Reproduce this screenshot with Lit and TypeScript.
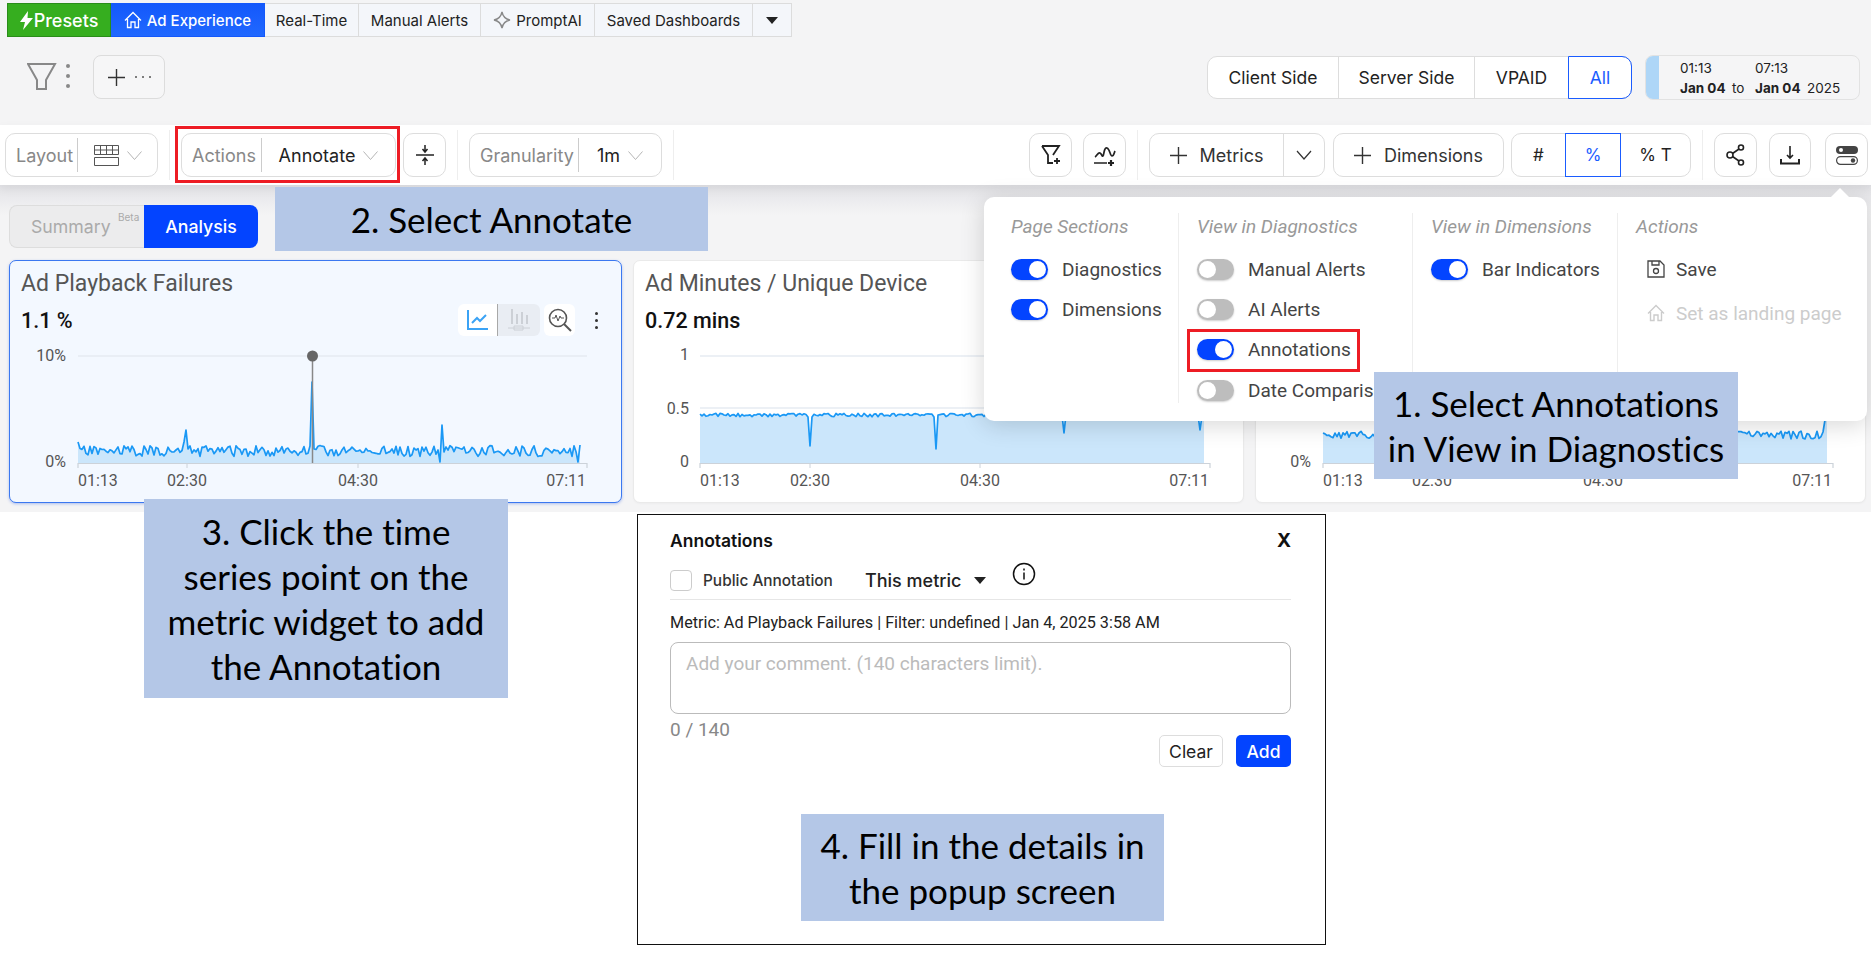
import { LitElement, html, css, svg } from 'lit';
import { customElement } from 'lit/decorators.js';

const rng = (seed: number) => () => {
  seed = (seed * 1664525 + 1013904223) % 4294967296;
  return seed / 4294967296;
};

type Spike = [number, number];

interface ChartCfg {
  view: number;
  width: number;
  x0: number;
  x1: number;
  fillEnd: number;
  base: number;
  jitter: number;
  seed: number;
  spikes: Spike[];
  ylabels: [string, number][];
  grid: number[];
  ticks: [string, number][];
  labelX: number;
}

const BASELINE = 463;

function series(c: ChartCfg) {
  const r = rng(c.seed);
  const pts: [number, number][] = [];
  for (let x = c.x0; x <= c.fillEnd; x += 2) {
    let y = c.base + (r() - 0.5) * c.jitter * 2;
    const hit = c.spikes.find((s) => Math.abs(s[0] - x) < 1);
    if (hit) y = hit[1];
    pts.push([x, +y.toFixed(1)]);
  }
  return pts;
}

function chart(c: ChartCfg, extra: unknown = null) {
  const pts = series(c);
  const line = pts.map((p) => p.join(',')).join(' ');
  const area = `${c.x0},${BASELINE} ${line} ${c.fillEnd},${BASELINE}`;
  return html`<svg class="chart" width=${c.width} height="155" viewBox="${c.view} 345 ${c.width} 155">
    ${c.grid.map((y) => svg`<line x1=${c.x0} x2=${c.x1} y1=${y} y2=${y} stroke="#e6ebf2" stroke-width="1.5"/>`)}
    <polygon points=${area} fill="#cbe6fb"/>
    <polyline points=${line} fill="none" stroke="#1a98f5" stroke-width="1.7" stroke-linejoin="round"/>
    <path d="M${c.x0} 468V463.5H${c.x1}V468" fill="none" stroke="#ccd2d9" stroke-width="1.2"/>
    ${c.ticks.slice(1, 3).map((t) => svg`<line x1=${t[1]} x2=${t[1]} y1="463" y2="468" stroke="#ccd2d9"/>`)}
    ${c.ylabels.map((l) => svg`<text x=${c.labelX} y=${l[1] + 6} text-anchor="end" class="axis">${l[0]}</text>`)}
    <text x=${c.x0} y="486" class="axis">${c.ticks[0][0]}</text>
    <text x=${c.ticks[1][1]} y="486" text-anchor="middle" class="axis">${c.ticks[1][0]}</text>
    <text x=${c.ticks[2][1]} y="486" text-anchor="middle" class="axis">${c.ticks[2][0]}</text>
    <text x=${c.x1 - 1} y="486" text-anchor="end" class="axis">${c.ticks[3][0]}</text>
    ${extra}
  </svg>`;
}

const card1: ChartCfg = {
  view: 10, width: 611, x0: 78, x1: 587, fillEnd: 580, base: 451, jitter: 5.5, seed: 11,
  spikes: [[78, 442], [184, 442], [186, 430], [188, 449], [310, 446], [312, 382], [314, 449], [438, 450], [440, 462], [442, 425], [444, 452], [578, 462], [580, 445]],
  ylabels: [['10%', 355], ['0%', 461]], grid: [356],
  ticks: [['01:13', 78], ['02:30', 187], ['04:30', 358], ['07:11', 587]], labelX: 66,
};
const card2: ChartCfg = {
  view: 634, width: 609, x0: 700, x1: 1210, fillEnd: 1204, base: 415, jitter: 1.8, seed: 5,
  spikes: [[808, 417], [810, 446], [812, 417], [934, 417], [936, 449], [938, 415], [1064, 433], [1200, 430]],
  ylabels: [['1', 354], ['0.5', 408], ['0', 461]], grid: [356, 408],
  ticks: [['01:13', 700], ['02:30', 810], ['04:30', 980], ['07:11', 1210]], labelX: 689,
};
const card3: ChartCfg = {
  view: 1257, width: 609, x0: 1324, x1: 1834, fillEnd: 1828, base: 435, jitter: 4, seed: 23,
  spikes: [[1824, 432], [1826, 420], [1828, 405]],
  ylabels: [['0%', 461]], grid: [],
  ticks: [['01:13', 1324], ['02:30', 1433], ['04:30', 1604], ['07:11', 1834]], labelX: 1312,
};

const chevron = html`<svg class="chev" width="15" height="9" viewBox="0 0 15 9"><path d="M.5.500l7 8 7-8" fill="none" stroke="currentColor" stroke-width="1"/></svg>`;
const plus = html`<svg width="17" height="17" viewBox="0 0 17 17"><path d="M8.500 0v17M0 8.500h17" stroke="#333" stroke-width="1.400"/></svg>`;
const homeIcon = (c: string, w = 1.3) => html`<svg width="18" height="18" viewBox="0 0 18 18" fill="none" stroke=${c} stroke-width=${w}><path d="M1 9.500L9 1.500l8 8M3.500 8v8.500h3.500v-5.500h4v5.500h3.500V8"/></svg>`;

@customElement('app-root')
export class AppRoot extends LitElement {
  static styles = css`
    :host { display: block; position: relative; width: 1871px; height: 967px; overflow: hidden; background: #fff; font-family: "Roboto", sans-serif; color: #333; }
    * { box-sizing: border-box; }
    .upper { background: #f4f4f5; height: 512px; }

    /* top tabs */
    .nav { display: flex; height: 37px; padding: 3px 0 0 7px; font-family: "Inter", sans-serif; font-size: 15px; }
    .nav > div { display: flex; align-items: center; justify-content: center; gap: 5px; background: #f4f6fa; border: 1px solid #dcdcdc; border-left: none; color: #222; white-space: nowrap; }
    .nav .presets { width: 104px; background: #36ae1f; border: 1px solid #2a8d1a; color: #fff; font-size: 18px; font-weight: 500; gap: 1px; }
    .nav .adx { width: 154px; background: linear-gradient(#1458fb, #2068ff); border-color: #1458fb; color: #fff; font-weight: 500; }
    .t-rt { width: 94px; } .t-ma { width: 122px; } .t-pa { width: 114px; } .t-sd { width: 158px; } .t-more { width: 39px; }
    .caret { width: 0; height: 0; border-left: 6px solid transparent; border-right: 6px solid transparent; border-top: 7px solid #222; }

    /* filter row */
    .filters { display: flex; align-items: center; height: 88px; padding: 0 11px 8px 27px; }
    .addf { width: 72px; height: 44px; margin-left: 22px; border: 1px solid #dcdcdc; border-radius: 8px; display: flex; align-items: center; justify-content: center; gap: 10px; background: #f6f6f7; }
    .dots3 { display: flex; gap: 5px; }
    .dots3 i { width: 2px; height: 2px; border-radius: 50%; background: #555; }
    .segment { margin-left: auto; display: flex; height: 43px; width: 425px; background: #fff; border: 1px solid #ddd; border-radius: 10px; font-family: "Inter", sans-serif; font-size: 17.5px; color: #222; }
    .segment div { display: flex; align-items: center; justify-content: center; border-right: 1px solid #ddd; }
    .seg-cs { width: 131px; } .seg-ss { width: 136px; } .seg-vp { width: 94px; }
    .segment .seg-all { flex: 1; margin: -1px; border: 1px solid #1a5cff; border-radius: 0 10px 10px 0; color: #1a5cff; }
    .date { position: relative; display: grid; grid-template-columns: 52px 23px 52px auto; grid-auto-rows: 20px; align-items: center; width: 215px; height: 45px; margin-left: 13px; padding: 2px 0 0 34px; background: #f5f5f6; border: 1px solid #e2e2e2; border-radius: 8px; overflow: hidden; font-family: "Inter", sans-serif; font-size: 13.5px; color: #222; }
    .date::before { content: ""; position: absolute; left: 0; top: 0; bottom: 0; width: 13px; background: #aed6f7; }
    .date b { font-weight: 700; }

    /* toolbar */
    .toolbar { position: relative; display: flex; align-items: center; height: 60px; padding: 0 3px 0 5px; background: #fff; box-shadow: 0 4px 10px rgba(0, 0, 0, 0.06); font-family: "Inter", sans-serif; }
    .grp { display: flex; align-items: center; height: 44px; background: #fff; border: 1px solid #ddd; border-radius: 10px; font-size: 18px; color: #222; }
    .grp .lbl { display: flex; align-items: center; height: 34px; padding: 0 0 0 10px; border-right: 1px solid #ccc; color: #888; white-space: nowrap; }
    .grp .val { display: flex; flex: 1; align-items: center; justify-content: center; gap: 8px; }
    .chev { color: #b5b5b5; }
    .g-layout { width: 153px; } .g-layout .lbl { width: 72px; }
    .g-actions { width: 215px; } .g-actions .lbl { width: 80px; }
    .g-gran { width: 193px; } .g-gran .lbl { width: 109px; }
    .sep { width: 1px; height: 50px; background: #eee; margin: 0 11px; }
    .ibtn { display: flex; align-items: center; justify-content: center; width: 43px; height: 44px; border: 1px solid #ddd; border-radius: 10px; background: #fff; flex: none; }
    .ibtn.dl { width: 42px; }
    .m-l7 { margin-left: 7px; } .m-l11 { margin-left: 11px; } .m-l12 { margin-left: 12px; } .m-l14 { margin-left: 14px; }
    .push { margin-left: auto; }
    .g-metrics { width: 176px; }
    .g-metrics .main { display: flex; align-items: center; justify-content: center; gap: 13px; width: 134px; height: 100%; border-right: 1px solid #ddd; color: #333; }
    .g-metrics .drop { flex: 1; display: flex; justify-content: center; color: #333; }
    .g-dims { width: 171px; margin-left: 8px; justify-content: center; gap: 13px; color: #333; }
    .g-unit { width: 180px; margin-left: 7px; overflow: visible; font-size: 17px; }
    .g-unit div { display: flex; align-items: center; justify-content: center; height: 100%; }
    .u-h { width: 53px; } .u-t { flex: 1; }
    .g-unit .u-p { width: 56px; height: 44px; border: 1px solid #1a5cff; color: #1a5cff; }

    /* tabs + cards */
    .body { height: 327px; padding: 20px 4px 0 9px; background: linear-gradient(#e3e3e7, #f4f4f5 30px); }
    .tabs { display: flex; width: 249px; height: 43px; font-size: 17.7px; font-family: "Inter", sans-serif; }
    .tabs .sum { position: relative; width: 135px; display: flex; align-items: center; padding-left: 21px; background: #ececed; border: 1px solid #ddd; border-right: none; border-radius: 8px 0 0 8px; color: #aaa; }
    .tabs .sum sup { position: absolute; left: 108px; top: 5px; font-size: 10px; color: #aaa; }
    .tabs .ana { flex: 1; display: flex; align-items: center; justify-content: center; background: #0344ff; border-radius: 0 8px 8px 0; color: #fff; font-weight: 500; }
    .cards { display: grid; grid-template-columns: 613px 611px 611px; gap: 11px; margin-top: 12px; }
    .card { height: 243px; background: #fff; border: 1px solid #eaeaea; border-radius: 7px; padding-top: 11px; box-shadow: 0 1px 2px rgba(0, 0, 0, 0.03); }
    .card.sel { background: #f3f8ff; border-color: #3b78f0; box-shadow: 0 1px 3px rgba(40, 90, 220, 0.35); }
    .title { height: 23px; line-height: 23px; padding-left: 11px; font-size: 23px; color: #555; white-space: nowrap; }
    .metric { display: flex; align-items: center; height: 32px; margin-top: 9px; padding-left: 11px; font-size: 21.5px; font-weight: 500; color: #111; }
    .tools { display: flex; align-items: center; margin-left: auto; }
    .tb { display: flex; align-items: center; justify-content: center; height: 32px; background: #fff; }
    .tb-line { width: 40px; border-radius: 6px 0 0 6px; border-right: 1px solid #a8a8a8; }
    .tb-bar { width: 42px; background: #e9edf3; border-radius: 0 6px 6px 0; }
    .tb-zoom { width: 31px; margin-left: 4px; border-radius: 6px; }
    .kebab { display: flex; flex-direction: column; gap: 4px; margin: 0 23px 0 20px; }
    .kebab i { width: 3px; height: 3px; border-radius: 50%; background: #333; }
    .chart { display: block; margin-top: 9px; }
    .axis { font: 16px "Roboto", sans-serif; fill: #555; }

    /* dialog */
    .dialog { width: 689px; height: 431px; margin: 2px 0 0 637px; padding: 0 34px 0 32px; border: 1px solid #111; background: #fff; }
    .d-head { display: flex; justify-content: space-between; align-items: center; height: 50px; font-family: "Inter", sans-serif; font-weight: 600; font-size: 17.5px; color: #111; }
    .d-x { font-size: 19px; font-weight: 700; }
    .d-row { display: flex; align-items: center; height: 32px; padding-bottom: 2px; }
    .chk { width: 22px; height: 21px; border: 1px solid #ccc; border-radius: 4px; }
    .pub { margin-left: 11px; width: 162px; font-family: "Inter", sans-serif; font-size: 15.4px; font-weight: 500; color: #333; white-space: nowrap; }
    .thism { font-family: "Inter", sans-serif; font-size: 18px; font-weight: 500; color: #222; width: 109px; white-space: nowrap; }
    .info { margin: 0 0 12px 26px; }
    .d-rule { height: 1px; margin-top: 2px; background: #e6e6e6; }
    .d-info { margin-top: 14px; height: 18px; line-height: 18px; font-size: 16.2px; color: #222; white-space: nowrap; }
    .ta { height: 72px; margin-top: 10px; padding: 9px 15px; border: 1px solid #bbb; border-radius: 8px; font-size: 19px; color: #bbb; }
    .cnt { margin-top: 4px; font-size: 19px; color: #888; }
    .d-btns { display: flex; justify-content: flex-end; gap: 13px; margin-top: -6px; font-family: "Inter", sans-serif; font-size: 17.5px; }
    .d-btns div { display: flex; align-items: center; justify-content: center; height: 32px; border-radius: 5px; }
    .clr { width: 64px; border: 1px solid #ddd; color: #222; }
    .add { width: 55px; background: #0344ff; color: #fff; font-weight: 500; }

    /* settings popover, opened over the page */
    .pop { position: absolute; left: 984px; top: 197px; width: 883px; height: 224px; display: flex; padding-top: 16px; background: #fff; border-radius: 10px; box-shadow: 0 4px 24px rgba(0, 0, 0, 0.16); }
    .pop::before { content: ""; position: absolute; left: 847px; top: -9px; border-left: 9px solid transparent; border-right: 9px solid transparent; border-bottom: 9px solid #fff; }
    .col { height: 190px; padding-left: 18px; border-right: 1px solid #eee; }
    .c1 { width: 195px; padding-left: 27px; } .c2 { width: 234px; } .c3 { width: 205px; } .c4 { flex: 1; border: none; }
    .col h4 { margin: 0 0 8px; height: 28px; line-height: 28px; font-size: 19px; font-weight: 400; font-style: italic; color: #999; white-space: nowrap; }
    .opt { display: flex; align-items: center; gap: 14px; height: 40.3px; font-size: 19px; color: #444; white-space: nowrap; }
    .tg { position: relative; width: 37px; height: 21px; border-radius: 11px; background: #bdbdbd; box-shadow: 0 1px 2px rgba(0, 0, 0, 0.2); flex: none; }
    .tg::after { content: ""; position: absolute; left: 2px; top: 2px; width: 17px; height: 17px; border-radius: 50%; background: #fff; }
    .tg.on { background: #0344ff; }
    .tg.on::after { left: 18px; }
    .act { display: flex; align-items: center; gap: 11px; height: 44px; padding-left: 11px; font-size: 19px; color: #444; white-space: nowrap; }
    .act.first { margin-top: -2px; }
    .act.off { color: #ccc; }

    /* tutorial overlays */
    .red { position: absolute; border: 3px solid #ed1c24; }
    .r-a { left: 175px; top: 126px; width: 225px; height: 57px; }
    .r-b { left: 1187px; top: 329px; width: 173px; height: 43px; }
    .note { position: absolute; display: flex; align-items: center; justify-content: center; text-align: center; background: #b4c7e7; color: #000; font-family: "Lato", sans-serif; font-size: 35px; line-height: 45px; font-variant-ligatures: none; white-space: nowrap; }
    .n1 { left: 1374px; top: 372px; width: 364px; height: 107px; }
    .n2 { left: 275px; top: 187px; width: 433px; height: 64px; }
    .n3 { left: 144px; top: 499px; width: 364px; height: 199px; }
    .n4 { left: 801px; top: 814px; width: 363px; height: 107px; }
  `;

  render() {
    return html`
      <div class="upper">
        <div class="nav">
          <div class="presets">
            <svg width="13" height="19" viewBox="0 0 13 19"><path d="M8 0L0 11h5l-2 8 10-12H7.500z" fill="#fff"/></svg>Presets
          </div>
          <div class="adx">${homeIcon('#fff')}Ad Experience</div>
          <div class="t-rt">Real-Time</div>
          <div class="t-ma">Manual Alerts</div>
          <div class="t-pa">
            <svg width="18" height="18" viewBox="0 0 18 18"><path d="M9 1c1 5 3 7 8 8-5 1-7 3-8 8-1-5-3-7-8-8 5-1 7-3 8-8z" fill="none" stroke="#888" stroke-width="1.400"/></svg>PromptAI
          </div>
          <div class="t-sd">Saved Dashboards</div>
          <div class="t-more"><span class="caret"></span></div>
        </div>

        <div class="filters">
          <svg width="44" height="28" viewBox="0 0 44 28">
            <path d="M1 1h27L19 17v9h-9v-9z" fill="none" stroke="#888" stroke-width="2"/>
            <circle cx="41" cy="3" r="2" fill="#888"/><circle cx="41" cy="13" r="2" fill="#888"/><circle cx="41" cy="23" r="2" fill="#888"/>
          </svg>
          <div class="addf">${plus}<span class="dots3"><i></i><i></i><i></i></span></div>
          <div class="segment">
            <div class="seg-cs">Client Side</div>
            <div class="seg-ss">Server Side</div>
            <div class="seg-vp">VPAID</div>
            <div class="seg-all">All</div>
          </div>
          <div class="date">
            <span>01:13</span><span></span><span>07:13</span><span></span>
            <b>Jan 04</b><span>to</span><b>Jan 04</b><span>2025</span>
          </div>
        </div>

        <div class="toolbar">
          <div class="grp g-layout">
            <div class="lbl">Layout</div>
            <div class="val">
              <svg width="25" height="21" viewBox="0 0 25 21" fill="none" stroke="#555"><path d="M.5.500h24v9H.5zM.5 5h24M6.500.500v9M12.500.500v9M18.500.500v9M.5 12.500h24v8H.5z"/></svg>
              ${chevron}
            </div>
          </div>
          <div class="sep"></div>
          <div class="grp g-actions">
            <div class="lbl">Actions</div>
            <div class="val">Annotate ${chevron}</div>
          </div>
          <div class="ibtn m-l7">
            <svg width="18" height="24" viewBox="0 0 18 24" fill="none" stroke="#222" stroke-width="1.500"><path d="M0 12h18M9 2v6M6.500 6l2.500 3 2.500-3M9 22v-6M6.500 18l2.500-3 2.500 3"/></svg>
          </div>
          <div class="sep"></div>
          <div class="grp g-gran">
            <div class="lbl">Granularity</div>
            <div class="val">1m ${chevron}</div>
          </div>
          <div class="sep"></div>

          <div class="ibtn push">
            <svg width="20" height="20" viewBox="0 0 20 20" fill="none" stroke="#222" stroke-width="1.800"><path d="M1 1h17l-6 9M1 1l6 9v8h5M13 16h6M16 13v6"/></svg>
          </div>
          <div class="ibtn m-l11">
            <svg width="24" height="22" viewBox="0 0 24 22" fill="none" stroke="#222" stroke-width="1.700"><path d="M2 13c2-1 3-5 5-4 2 1 2 4 3 3s1-9 4-8 3 8 5 8 2-3 3-5M1 19h13"/><path d="M18 16v6M15 19h6" stroke-width="2.200"/></svg>
          </div>
          <div class="sep"></div>
          <div class="grp g-metrics">
            <div class="main">${plus}Metrics</div>
            <div class="drop"><svg width="16" height="10" viewBox="0 0 16 10"><path d="M1 1l7 8 7-8" fill="none" stroke="#333" stroke-width="1.200"/></svg></div>
          </div>
          <div class="grp g-dims">${plus}Dimensions</div>
          <div class="grp g-unit">
            <div class="u-h">#</div>
            <div class="u-p">%</div>
            <div class="u-t">% T</div>
          </div>
          <div class="sep"></div>
          <div class="ibtn">
            <svg width="20" height="22" viewBox="0 0 20 22" fill="none" stroke="#222" stroke-width="1.600"><circle cx="4" cy="11" r="3"/><circle cx="15" cy="3.500" r="2.500"/><circle cx="15" cy="18.500" r="2.500"/><path d="M6.500 9.500l6.500-4.500M6.500 12.500l6.500 4.500"/></svg>
          </div>
          <div class="ibtn dl m-l12">
            <svg width="20" height="20" viewBox="0 0 20 20" fill="none" stroke="#222" stroke-width="1.600"><path d="M10 1v12M7 10l3 3 3-3"/><path d="M1 14v4.500h18V14" stroke-width="2"/></svg>
          </div>
          <div class="ibtn m-l14">
            <svg width="22" height="19" viewBox="0 0 22 19"><rect x="0" y="0" width="22" height="8" rx="4" fill="#444"/><circle cx="5" cy="4" r="2" fill="#fff"/><rect x=".6" y="10.600" width="20.800" height="7.800" rx="3.900" fill="none" stroke="#444" stroke-width="1.200"/><circle cx="17" cy="14.500" r="2.200" fill="#444"/></svg>
          </div>
        </div>

        <div class="body">
          <div class="tabs">
            <div class="sum">Summary<sup>Beta</sup></div>
            <div class="ana">Analysis</div>
          </div>
          <div class="cards">
            <div class="card sel">
              <div class="title">Ad Playback Failures</div>
              <div class="metric">1.1 %
                <div class="tools">
                  <div class="tb tb-line">
                    <svg width="22" height="22" viewBox="0 0 22 22" fill="none" stroke="#3ba3f5" stroke-width="2"><path d="M1 1v19h20M5 14l5-5 3 3 6-6"/></svg>
                  </div>
                  <div class="tb tb-bar">
                    <svg width="22" height="24" viewBox="0 0 22 24" fill="none" stroke="#ccd0d6" stroke-width="2"><path d="M4 1v15M9 6v10M14 4v12M19 7v9"/><path d="M0 20h22M6 18h9v4H6z" stroke-width="1"/></svg>
                  </div>
                  <div class="tb tb-zoom">
                    <svg width="24" height="24" viewBox="0 0 24 24" fill="none" stroke="#555" stroke-width="1.600"><circle cx="10" cy="10" r="8.500"/><path d="M16 16l7 7" stroke-width="2"/><path d="M4 10h3l1-3 2 6 2-5 1 2h3" stroke-width="1"/></svg>
                  </div>
                </div>
                <div class="kebab"><i></i><i></i><i></i></div>
              </div>
              ${chart(card1, svg`<line x1="312.500" x2="312.500" y1="356" y2="463" stroke="#888" stroke-width="1.500"/><circle cx="312.500" cy="356" r="5.500" fill="#666"/>`)}
            </div>
            <div class="card">
              <div class="title">Ad Minutes / Unique Device</div>
              <div class="metric">0.72 mins</div>
              ${chart(card2)}
            </div>
            <div class="card">
              <div class="title"></div>
              <div class="metric"></div>
              ${chart(card3)}
            </div>
          </div>
        </div>
      </div>

      <div class="dialog">
        <div class="d-head"><span>Annotations</span><span class="d-x">X</span></div>
        <div class="d-row">
          <div class="chk"></div>
          <div class="pub">Public Annotation</div>
          <div class="thism">This metric</div>
          <span class="caret"></span>
          <svg class="info" width="24" height="24" viewBox="0 0 24 24" fill="none" stroke="#111" stroke-width="1.500"><circle cx="12" cy="12" r="10.500"/><path d="M12 10.500v7M12 6.500v2"/></svg>
        </div>
        <div class="d-rule"></div>
        <div class="d-info">Metric: Ad Playback Failures | Filter: undefined | Jan 4, 2025 3:58 AM</div>
        <div class="ta">Add your comment. (140 characters limit).</div>
        <div class="cnt">0 / 140</div>
        <div class="d-btns"><div class="clr">Clear</div><div class="add">Add</div></div>
      </div>

      <div class="pop">
        <div class="col c1">
          <h4>Page Sections</h4>
          <div class="opt"><span class="tg on"></span>Diagnostics</div>
          <div class="opt"><span class="tg on"></span>Dimensions</div>
        </div>
        <div class="col c2">
          <h4>View in Diagnostics</h4>
          <div class="opt"><span class="tg"></span>Manual Alerts</div>
          <div class="opt"><span class="tg"></span>AI Alerts</div>
          <div class="opt"><span class="tg on"></span>Annotations</div>
          <div class="opt"><span class="tg"></span>Date Comparison</div>
        </div>
        <div class="col c3">
          <h4>View in Dimensions</h4>
          <div class="opt"><span class="tg on"></span>Bar Indicators</div>
        </div>
        <div class="col c4">
          <h4>Actions</h4>
          <div class="act first">
            <svg width="18" height="18" viewBox="0 0 18 18" fill="none" stroke="#444" stroke-width="1.300"><path d="M1 1h12l4 4v12H1zM5 1v4h7V1"/><circle cx="9" cy="11" r="2.500"/></svg>Save
          </div>
          <div class="act off">${homeIcon('#ccc', 1.4)}Set as landing page</div>
        </div>
      </div>

      <div class="red r-a"></div>
      <div class="red r-b"></div>
      <div class="note n1">1. Select Annotations<br />in View in Diagnostics</div>
      <div class="note n2">2. Select Annotate</div>
      <div class="note n3">3. Click the time<br />series point on the<br />metric widget to add<br />the Annotation</div>
      <div class="note n4">4. Fill in the details in<br />the popup screen</div>
    `;
  }
}
